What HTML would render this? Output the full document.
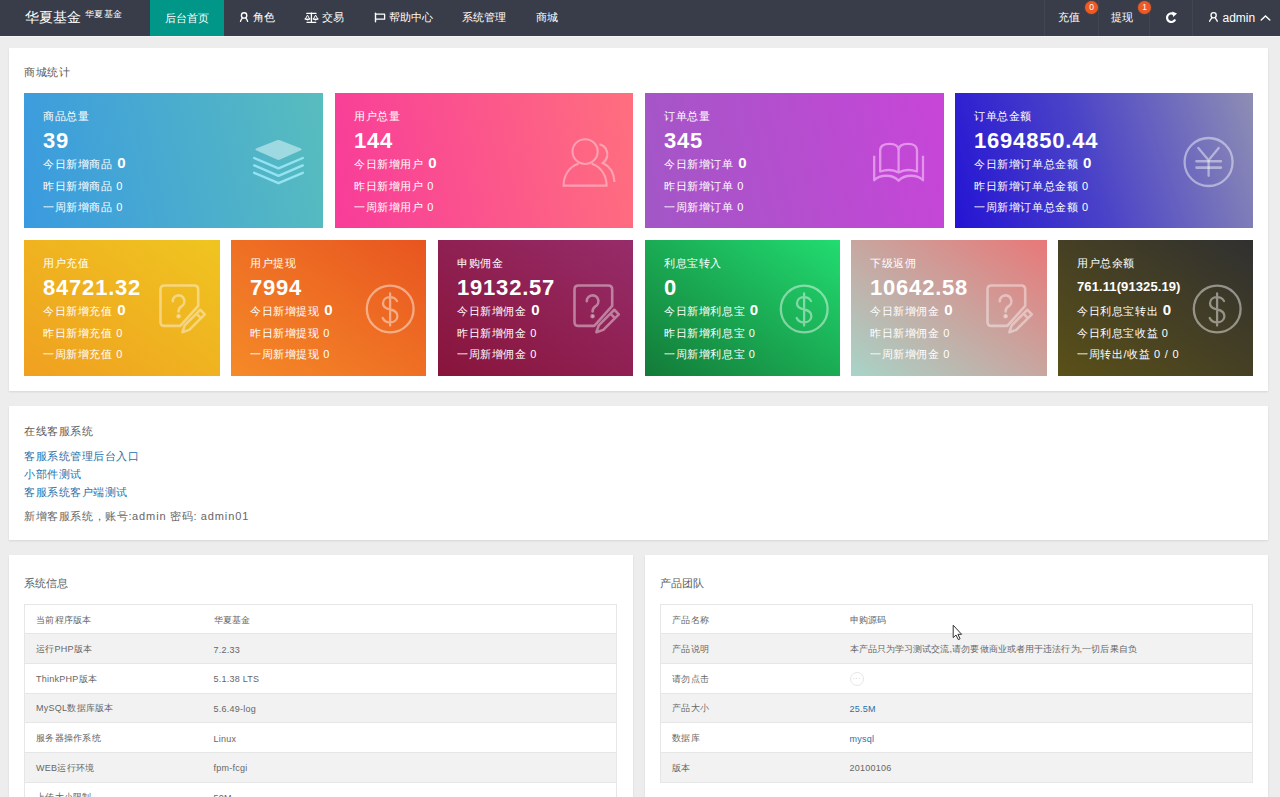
<!DOCTYPE html>
<html><head><meta charset="utf-8">
<style>
*{margin:0;padding:0;box-sizing:border-box}
html,body{width:1280px;height:797px;overflow:hidden}
body{background:#ededed;font-family:"Liberation Sans",sans-serif;color:#333;position:relative}
.hd{position:absolute;left:0;top:0;width:1280px;height:36px;background:#393d49;color:#fff}
.abs{position:absolute;white-space:nowrap}
.sep{position:absolute;top:0;width:1px;height:36px;background:rgba(255,255,255,.05)}
.badge{position:absolute;top:1px;width:13px;height:13px;border-radius:50%;background:#ee5a24;color:#fff;font-size:8.5px;text-align:center;line-height:13px;box-shadow:0 0 2px rgba(238,90,36,.5)}
.panel{position:absolute;background:#fff;box-shadow:0 1px 2px rgba(0,0,0,.1)}
.ptitle{position:absolute;left:15px;font-size:11px;letter-spacing:.5px;color:#5c5c5c;white-space:nowrap;line-height:1}
.card{position:absolute;color:#fff;overflow:hidden}
.card .t,.card .n,.card .l1,.card .l2,.card .l3{position:absolute;left:19px;white-space:nowrap;line-height:1}
.card .t{top:17.5px;font-size:11px;letter-spacing:.6px}
.card .n{top:36.6px;font-size:22px;font-weight:bold;letter-spacing:.8px}
.card .n.small{font-size:13px;letter-spacing:.1px;top:39.5px}
.card .l1{top:65.8px;font-size:11px;letter-spacing:.6px}
.card .l1 b{font-size:15px;line-height:0;margin-left:1px}
.card .l2{top:87.8px;font-size:11px;letter-spacing:.6px}
.card .l3{top:108.9px;font-size:11px;letter-spacing:.6px}
.card svg{position:absolute}
.ic-layers{left:226px;top:43px}
.ic-users{left:224px;top:42px}
.ic-book{left:225px;top:45px}
.ic-yen{left:224px;top:40px}
.ic-qedit{left:130px;top:40px}
.ic-dollar{left:130px;top:40px}
.lk{position:absolute;left:15px;font-size:11px;letter-spacing:.5px;color:#2a70aa;white-space:nowrap;line-height:1}
.lt{letter-spacing:.9px}
.ptxt{position:absolute;left:15px;font-size:11px;letter-spacing:.6px;color:#666;white-space:nowrap;line-height:1}
table{position:absolute;border-collapse:collapse;font-size:9px;letter-spacing:.25px;color:#666}
td{height:29.67px;padding:2px 11px 0;border:1px solid #e6e6e6;border-width:1px 0;white-space:nowrap}
table{border:1px solid #e6e6e6}
.blu{color:#2a70aa}
.dots{display:inline-block;width:14px;height:14px;border:1px solid #e6e6e6;border-radius:50%;font-size:8px;color:#ccc;text-align:center;line-height:12px;vertical-align:middle}
tr:nth-child(even) td{background:#f2f2f2}
</style></head><body>
<div class="abs" style="left:0;top:36px;width:1280px;height:1px;background:#f5f5f5"></div>
<div class="hd">
  <div class="abs" style="left:25px;top:8.5px;font-size:14px">华夏基金</div>
  <div class="abs" style="left:84.5px;top:7.5px;font-size:9.2px;letter-spacing:.5px">华夏基金</div>
  <div class="abs" style="left:150px;top:0;width:74px;height:36px;background:#009688"></div>
  <div class="abs" style="left:165px;top:11.8px;font-size:10.8px">后台首页</div>
  <div class="abs" style="left:253px;top:11px;font-size:10.8px">角色</div>
  <div class="abs" style="left:322px;top:11px;font-size:10.8px">交易</div>
  <div class="abs" style="left:389px;top:11px;font-size:10.8px">帮助中心</div>
  <div class="abs" style="left:462px;top:11px;font-size:10.8px">系统管理</div>
  <div class="abs" style="left:536px;top:11px;font-size:10.8px">商城</div>
  <div class="abs" style="left:1058px;top:11px;font-size:10.8px">充值</div>
  <div class="abs" style="left:1111px;top:11px;font-size:10.8px">提现</div>
  <div class="abs" style="left:1222.5px;top:11px;font-size:12px">admin</div>
  <div class="sep" style="left:1044px"></div><div class="sep" style="left:1098px"></div><div class="sep" style="left:1149px"></div><div class="sep" style="left:1192px"></div>
  <div class="badge" style="left:1085px">0</div>
  <div class="badge" style="left:1138px">1</div>
  <svg class="abs" style="left:0;top:0" width="1280" height="36" fill="none" stroke="#fff" stroke-linecap="round">
   <circle cx="244.1" cy="15.4" r="2.7" stroke-width="1.35"/>
   <path d="M242.3,18.1 Q240.9,19.6 240.5,21.3 M246.1,18.4 Q247.2,19.7 247.6,21.3" stroke-width="1.35"/>
   <path d="M311.4,13 V22 M306.8,13.4 H316 M307,22.3 H315.8" stroke-width="1.3"/>
   <path d="M305.3,19.1 L307.5,15.1 L309.7,19.1 M313.4,19.1 L315.6,15.1 L317.8,19.1" stroke-width="1"/>
   <path d="M305,19 Q307.5,21.4 310,19 Z M313.1,19 Q315.6,21.4 318.1,19 Z" fill="#fff" stroke-width=".6"/>
   <path d="M375.5,13.3 V21.7" stroke-width="1.4"/>
   <path d="M375.6,14.2 H384.6 V19.2 H376" stroke-width="1.3" stroke-linejoin="round"/>
   <path d="M1175.2,19.6 A4.3,4.3 0 1 1 1173.6,14" stroke-width="2.2" stroke-linecap="butt"/>
   <path d="M1172.2,11.4 L1177,13.4 L1173.2,17 Z" fill="#fff" stroke="none"/>
   <circle cx="1213.6" cy="15.3" r="2.6" stroke-width="1.3"/>
   <path d="M1211.9,18 Q1210.2,19.6 1209.6,21.3 M1215.6,18.5 Q1216.8,19.8 1217.3,21.3" stroke-width="1.3"/>
   <path d="M1261.2,20.1 L1265.5,15.9 L1269.8,20.1" stroke-width="1.4"/>
  </svg>
</div>

<div class="panel" style="left:9px;top:48px;width:1259px;height:343px">
  <div class="ptitle" style="top:19px">商城统计</div>
</div>

<div class="panel" style="left:9px;top:406px;width:1259px;height:134px">
  <div class="ptitle" style="top:20px">在线客服系统</div>
  <a class="lk" style="top:44.7px">客服系统管理后台入口</a>
  <a class="lk" style="top:63px">小部件测试</a>
  <a class="lk" style="top:81px">客服系统客户端测试</a>
  <div class="ptxt" style="top:104.5px">新增客服系统，账号:<span class="lt">admin</span> 密码: <span class="lt">admin01</span></div>
</div>

<div class="panel" style="left:9px;top:555px;width:624px;height:260px">
  <div class="ptitle" style="top:23px;letter-spacing:0">系统信息</div>
  <table style="left:15px;top:48.7px;width:593px"><colgroup><col style="width:178px"><col></colgroup><tr><td>当前程序版本</td><td>华夏基金</td></tr><tr><td>运行PHP版本</td><td>7.2.33</td></tr><tr><td>ThinkPHP版本</td><td>5.1.38 LTS</td></tr><tr><td>MySQL数据库版本</td><td>5.6.49-log</td></tr><tr><td>服务器操作系统</td><td>Linux</td></tr><tr><td>WEB运行环境</td><td>fpm-fcgi</td></tr><tr><td>上传大小限制</td><td>50M</td></tr></table>
</div>
<div class="panel" style="left:645px;top:555px;width:623px;height:260px">
  <div class="ptitle" style="top:23px;letter-spacing:0">产品团队</div>
  <table style="left:15px;top:48.7px;width:593px"><colgroup><col style="width:178px"><col></colgroup><tr><td>产品名称</td><td>申购源码</td></tr><tr><td>产品说明</td><td style="letter-spacing:.1px">本产品只为学习测试交流,请勿要做商业或者用于违法行为,一切后果自负</td></tr><tr><td>请勿点击</td><td><span class="dots">···</span></td></tr><tr><td>产品大小</td><td><span class="blu">25.5M</span></td></tr><tr><td>数据库</td><td><span class="blu">mysql</span></td></tr><tr><td>版本</td><td>20100106</td></tr></table>
</div>
<svg width="0" height="0" style="position:absolute"><defs>
<g id="i-layers">
 <path d="M6,14.2 Q4.5,13.4 6,12.6 L27,4.3 Q28.5,3.7 30,4.3 L51,12.6 Q52.5,13.4 51,14.2 L30,23.6 Q28.5,24.3 27,23.6 Z" fill="rgba(220,245,250,.55)"/>
 <path d="M4.2,22 L28.5,32.4 L52.8,22 M4.2,29.4 L28.5,39.8 L52.8,29.4 M4.2,36.8 L28.5,47.2 L52.8,36.8" fill="none" stroke="rgba(160,235,250,.85)" stroke-width="2.4" stroke-linecap="round" stroke-linejoin="round"/>
</g>
<g id="i-users" fill="none" stroke="rgba(255,255,255,.38)" stroke-width="2.1">
 <ellipse cx="26.1" cy="16.6" rx="12.6" ry="12.4"/>
 <path d="M19.5,28.8 C10.5,31.5 4.6,40 4.6,50.6 L47.6,50.6 C47.6,40 41.5,31.5 32.7,28.8"/>
 <path d="M40.5,9.3 C46.5,10.8 49,16 48.2,21 C47.6,24.2 46,26.5 43.8,28 C50.5,31 55,38 55.5,47"/>
</g>
<g id="i-book" fill="none" stroke="rgba(255,210,255,.55)" stroke-width="2.3" stroke-linejoin="round">
 <path d="M28.6,34.5 V12.5 C28.6,8 25.3,5.9 19.4,5.9 C13.5,5.9 10.2,8 10.2,12.5 V33.5 C16.7,31.4 24.2,32 28.6,34.5 C33,32 40.5,31.4 47,33.5 V12.5 C47,8 43.7,5.9 37.8,5.9 C31.9,5.9 28.6,8 28.6,12.5"/>
 <path d="M4.2,17.7 L4.2,42.3 C10,36.2 22.5,36.2 28.6,42.6 C34.7,36.2 47.2,36.2 53,42.3 L53,17.7"/>
</g>
<g id="i-yen" fill="none" stroke="rgba(255,255,255,.45)" stroke-width="2.3" stroke-linecap="round">
 <circle cx="29.6" cy="29" r="24"/>
 <path d="M19.3,15 L29.6,27.3 L39.7,15 M29.6,27.3 V42.8"/>
 <path d="M17.5,28.2 H41.9 M17.5,34.6 H41.9" stroke-width="2.6"/>
</g>
<g id="i-qedit" fill="none" stroke="rgba(255,255,255,.42)" stroke-width="2.6" stroke-linejoin="round" stroke-linecap="round">
 <path d="M44.2,25.9 V9.5 Q44.2,5.5 40.2,5.5 H10.5 Q6.5,5.5 6.5,9.5 V41.9 Q6.5,45.9 10.5,45.9 H26.3 Z"/>
 <path d="M18.8,21.2 A5.8,5.8 0 1 1 27.4,26.3 C25.6,27.5 24.6,28.6 24.6,31.4"/>
 <circle cx="24.6" cy="36.2" r="1" fill="rgba(255,255,255,.42)"/>
 <g transform="translate(28.4,52.2) rotate(-45)"><path d="M0,0 L6.5,-3.2 L28.5,-3.2 L28.5,3.2 L6.5,3.2 Z M23,-3.2 V3.2"/></g>
</g>
<g id="i-dollar" fill="none" stroke="rgba(255,255,255,.45)" stroke-width="2.3" stroke-linecap="round">
 <circle cx="29.2" cy="29" r="23.4"/>
 <path d="M36,21 C34.5,18.5 32,17.2 29,17.2 C25,17.2 22,19.5 22,23.5 C22,27.5 25.5,28.7 29,29.5 C33,30.3 36.4,32 36.4,36.2 C36.4,40 33,42.3 29,42.3 C25.5,42.3 22.8,40.5 21.7,38 M29.1,13.4 V45.6" stroke-width="2.3"/>
</g>
</defs></svg>
<!-- CARDS -->
<div class="card" style="left:24px;top:93px;width:299px;height:135px;background:linear-gradient(78deg,#3a9ae0,#58bdbe)">
  <div class="t">商品总量</div><div class="n">39</div><div class="l1">今日新增商品 <b>0</b></div><div class="l2">昨日新增商品 0</div><div class="l3">一周新增商品 0</div>
  <svg class="ic ic-layers" width="60" height="60"><use href="#i-layers"/></svg>
</div>
<div class="card" style="left:335px;top:93px;width:298px;height:135px;background:linear-gradient(80deg,#f83c9a,#ff6f7e)">
  <div class="t">用户总量</div><div class="n">144</div><div class="l1">今日新增用户 <b>0</b></div><div class="l2">昨日新增用户 0</div><div class="l3">一周新增用户 0</div>
  <svg class="ic ic-users" width="60" height="60"><use href="#i-users"/></svg>
</div>
<div class="card" style="left:645px;top:93px;width:299px;height:135px;background:linear-gradient(78deg,#a257c6,#c845d8)">
  <div class="t">订单总量</div><div class="n">345</div><div class="l1">今日新增订单 <b>0</b></div><div class="l2">昨日新增订单 0</div><div class="l3">一周新增订单 0</div>
  <svg class="ic ic-book" width="60" height="60"><use href="#i-book"/></svg>
</div>
<div class="card" style="left:955px;top:93px;width:298px;height:135px;background:linear-gradient(72deg,#2414d4 0%,#4a42c8 45%,#8e8eb4 100%)">
  <div class="t">订单总金额</div><div class="n">1694850.44</div><div class="l1">今日新增订单总金额 <b>0</b></div><div class="l2">昨日新增订单总金额 0</div><div class="l3">一周新增订单总金额 0</div>
  <svg class="ic ic-yen" width="60" height="60"><use href="#i-yen"/></svg>
</div>
<div class="card" style="left:24px;top:240px;width:196px;height:136px;background:linear-gradient(to top right,#f0a020,#efc520)">
  <div class="t">用户充值</div><div class="n">84721.32</div><div class="l1">今日新增充值 <b>0</b></div><div class="l2">昨日新增充值 0</div><div class="l3">一周新增充值 0</div>
  <svg class="ic ic-qedit" width="60" height="60"><use href="#i-qedit"/></svg>
</div>
<div class="card" style="left:231px;top:240px;width:195px;height:136px;background:linear-gradient(to top right,#f58a28,#e85520)">
  <div class="t">用户提现</div><div class="n">7994</div><div class="l1">今日新增提现 <b>0</b></div><div class="l2">昨日新增提现 0</div><div class="l3">一周新增提现 0</div>
  <svg class="ic ic-dollar" width="60" height="60"><use href="#i-dollar"/></svg>
</div>
<div class="card" style="left:438px;top:240px;width:195px;height:136px;background:linear-gradient(to top right,#88143a,#962c6a)">
  <div class="t">申购佣金</div><div class="n">19132.57</div><div class="l1">今日新增佣金 <b>0</b></div><div class="l2">昨日新增佣金 0</div><div class="l3">一周新增佣金 0</div>
  <svg class="ic ic-qedit" width="60" height="60"><use href="#i-qedit"/></svg>
</div>
<div class="card" style="left:645px;top:240px;width:195px;height:136px;background:linear-gradient(to top right,#137a38,#22dc70)">
  <div class="t">利息宝转入</div><div class="n">0</div><div class="l1">今日新增利息宝 <b>0</b></div><div class="l2">昨日新增利息宝 0</div><div class="l3">一周新增利息宝 0</div>
  <svg class="ic ic-dollar" width="60" height="60"><use href="#i-dollar"/></svg>
</div>
<div class="card" style="left:851px;top:240px;width:196px;height:136px;background:linear-gradient(to top right,#a8d4c8,#e87878)">
  <div class="t">下级返佣</div><div class="n">10642.58</div><div class="l1">今日新增佣金 <b>0</b></div><div class="l2">昨日新增佣金 0</div><div class="l3">一周新增佣金 0</div>
  <svg class="ic ic-qedit" width="60" height="60"><use href="#i-qedit"/></svg>
</div>
<div class="card" style="left:1058px;top:240px;width:195px;height:136px;background:linear-gradient(to top right,#5a5018,#303030)">
  <div class="t">用户总余额</div><div class="n small">761.11(91325.19)</div><div class="l1">今日利息宝转出 <b>0</b></div><div class="l2">今日利息宝收益 0</div><div class="l3">一周转出/收益 <span style="word-spacing:1px;letter-spacing:.3px">0 / 0</span></div>
  <svg class="ic ic-dollar" width="60" height="60"><use href="#i-dollar"/></svg>
</div>
<!-- /CARDS -->
<svg style="position:absolute;left:950px;top:622px" width="16" height="22"><path d="M3.2,3.2 L3.2,15.6 L6,13 L8.3,17.6 L10.1,16.8 L7.9,12.3 L11.6,12.3 Z" fill="#fff" stroke="#333" stroke-width="1" stroke-linejoin="round"/></svg>
</body></html>
